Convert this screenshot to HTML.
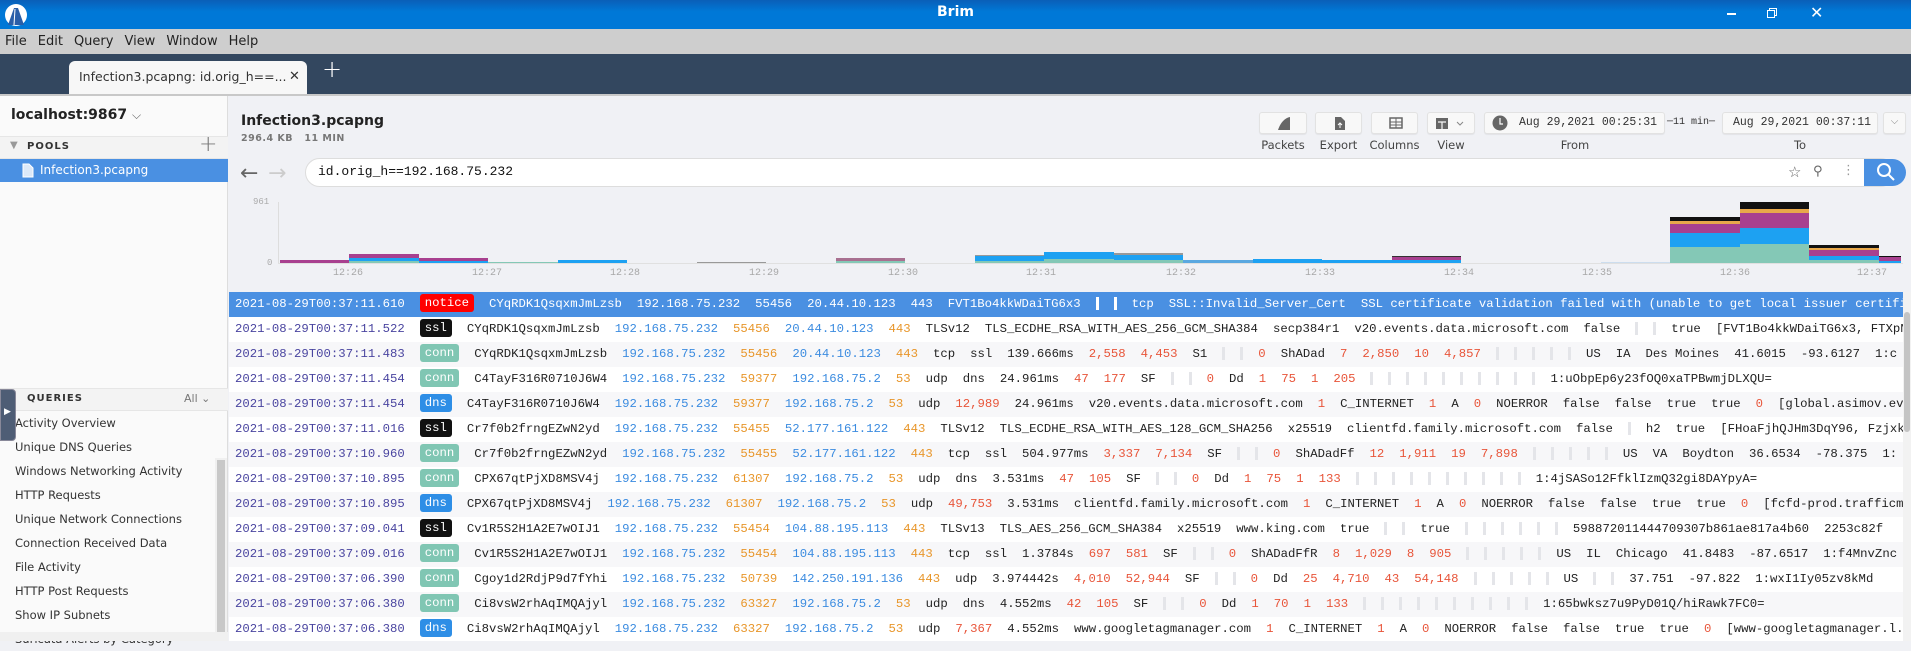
<!DOCTYPE html>
<html><head><meta charset="utf-8"><style>
*{box-sizing:border-box;margin:0;padding:0}
body{width:1911px;height:641px;overflow:hidden;position:relative;font-family:"DejaVu Sans","Liberation Sans",sans-serif;background:#f0f1f5}
.a{position:absolute;white-space:nowrap}
#title{left:0;top:0;width:1911px;height:29px;background:linear-gradient(#0a5fb8,#0078d7 40%,#0078d7);color:#fff;font-size:14px;font-weight:bold;text-align:center;line-height:25px}
#menu{left:0;top:29px;width:1911px;height:25px;background:#cecece;font-size:13px;color:#222;line-height:25px}
#menu span{margin-left:5px;margin-right:6px}
#tabs{left:0;top:54px;width:1911px;height:42px;background:#33475f;border-bottom:2px solid #c8c8c8}
#tab{left:69px;top:7px;width:238px;height:33px;background:#f7f7f7;border-radius:6px 6px 0 0;font-size:12.5px;color:#333;line-height:32px;padding-left:10px;overflow:hidden}
#side{left:0;top:96px;width:228px;height:545px;background:#fafafa;border-right:1px solid #ddd}
.mono{font-family:"Liberation Mono",monospace}
.btn{position:absolute;top:112px;height:22px;background:#f8f8f8;border:1px solid #e2e2e2;border-radius:3px;box-shadow:0 1px 1px rgba(0,0,0,.06);white-space:nowrap}
.lbl{position:absolute;top:138px;font-size:11.5px;color:#444;text-align:center}
#rows{left:229px;top:292px;width:1674px;height:349px;overflow:hidden;font-family:"Liberation Mono",monospace;font-size:12.3px;background:#fff}
.r{height:25px;line-height:25px;white-space:nowrap;color:#222;padding-left:6px}
.r:nth-child(odd){background:#f7f7f9}
.r span{margin-right:15px}
.r .t{color:#4a45a0}
.r .ip{color:#3c8ce0}
.r .pt{color:#e8962a}
.r .n{color:#e8553a}
.b{display:inline-block;height:18px;line-height:18px;padding:0 5px;border-radius:3px;color:#fff;vertical-align:middle;position:relative;top:-1px}
.notice{background:#ff0000}.ssl{background:#111}.conn{background:#80c6b3}.dns{background:#2e8ee6}
.e{display:inline-block;width:3px;height:13px;background:#e4e5e9;vertical-align:middle;margin-right:15px}
.sel{background:#4a90e2!important;color:#fff!important}
.sel span{color:#fff!important}
.sel .e{background:#fff}
.ax{position:absolute;top:268px;font-family:"Liberation Mono",monospace;font-size:10px;color:#a8a8a8}
</style></head><body>
<div id="title" class="a">Brim</div>
<svg class="a" style="left:4px;top:3px" width="24" height="24" viewBox="0 0 24 24"><circle cx="12" cy="12" r="11" fill="#fff"/><path d="M4 22 L10 5 L14 5 L20 22Z" fill="#2a5ea8"/><path d="M11 6 L10 22" stroke="#fff" stroke-width="1"/></svg>
<div class="a" style="left:1727px;top:13px;width:9px;height:1.5px;background:#fff"></div>
<div class="a" style="left:1769px;top:8px;width:8px;height:8px;border:1.3px solid #fff"></div>
<div class="a" style="left:1767px;top:10px;width:8px;height:8px;border:1.3px solid #fff;background:#0078d7"></div>
<div class="a" style="left:1810px;top:3px;color:#fff;font-size:16px">✕</div>
<div id="menu" class="a"><span>File</span><span>Edit</span><span>Query</span><span>View</span><span>Window</span><span>Help</span></div>
<div id="tabs" class="a"><div id="tab" class="a">Infection3.pcapng: id.orig_h==...<span style="position:absolute;left:220px;top:0;font-size:13px">✕</span></div>
<div class="a" style="left:322px;top:1px;color:#fff;font-size:24px;font-weight:300">+</div></div>

<div id="side" class="a">
<div class="a" style="left:11px;top:11px;font-size:14px;font-weight:bold;color:#222">localhost:9867 <span style="font-weight:normal;color:#666;font-size:12px">⌵</span></div>
<div class="a" style="left:0;top:40px;width:228px;height:23px;background:#f3f3f3;border-top:1px solid #e6e6e6;border-bottom:1px solid #e6e6e6"></div>
<div class="a" style="left:10px;top:44px;font-size:10px;color:#999">▼</div>
<div class="a" style="left:27px;top:45px;font-size:10px;font-weight:bold;letter-spacing:1px;color:#333">POOLS</div>
<div class="a" style="left:199px;top:36px;font-size:22px;color:#777;font-weight:300">+</div>
<div class="a" style="left:0;top:63px;width:228px;height:23px;background:#4a90e2"></div>
<svg class="a" style="left:22px;top:67px" width="12" height="15" viewBox="0 0 12 15"><path d="M1 1H7L11 5V14H1Z" fill="#dce9f8" stroke="#fff"/></svg>
<div class="a" style="left:40px;top:67px;font-size:12px;color:#fff">Infection3.pcapng</div>
<div class="a" style="left:0;top:292px;width:228px;height:23px;background:#f3f3f3;border-top:1px solid #e6e6e6;border-bottom:1px solid #e6e6e6"></div>
<div class="a" style="left:27px;top:297px;font-size:10px;font-weight:bold;letter-spacing:1px;color:#333">QUERIES</div>
<div class="a" style="left:184px;top:296px;font-size:11px;color:#777">All ⌄</div>
<div class="a" style="left:15px;top:315px;font-size:11.5px;color:#333;line-height:24px">Activity Overview<br>Unique DNS Queries<br>Windows Networking Activity<br>HTTP Requests<br>Unique Network Connections<br>Connection Received Data<br>File Activity<br>HTTP Post Requests<br>Show IP Subnets<br>Suricata Alerts by Category</div>
<div class="a" style="left:215px;top:362px;width:12px;height:176px;background:#c8c8c8;border:2px solid #f0f0f0"></div>
<div class="a" style="left:0;top:536px;width:228px;height:9px;background:#f0f0f0"></div>
</div>
<div class="a" style="left:0;top:389px;width:16px;height:52px;background:#4e5d75;border-radius:0 4px 4px 0;border:1px solid #889"></div>
<div class="a" style="left:4px;top:407px;color:#fff;font-size:9px">▶</div>

<div class="a" style="left:241px;top:113px;font-size:14px;font-weight:bold;color:#222">Infection3.pcapng</div>
<div class="a" style="left:241px;top:133px;font-size:9.5px;font-weight:bold;color:#777;letter-spacing:.5px">296.4 KB &nbsp; 11 MIN</div>

<div class="btn" style="left:1259px;width:48px"><svg style="position:absolute;left:17px;top:3px" width="14" height="15"><path d="M1 14C3 8 7 2 13 1V14Z" fill="#666"/></svg></div>
<div class="btn" style="left:1315px;width:47px"><svg style="position:absolute;left:18px;top:3px" width="12" height="15"><path d="M1 1H7L11 5V14H1Z" fill="#666"/><path d="M6 12V7M4 9L6 7L8 9" stroke="#fff" fill="none"/></svg></div>
<div class="btn" style="left:1371px;width:47px"><svg style="position:absolute;left:17px;top:4px" width="14" height="12"><rect x="1" y="1" width="12" height="10" fill="none" stroke="#666" stroke-width="1.5"/><path d="M1 5H13M1 8H13M7 1V11" stroke="#666"/></svg></div>
<div class="btn" style="left:1427px;width:48px"><svg style="position:absolute;left:7px;top:4px" width="34" height="13"><rect x="1" y="1" width="12" height="11" fill="#666"/><path d="M3 5H11M7 5V12" stroke="#f8f8f8" stroke-width="1.2"/><path d="M22 5L25 8L28 5" stroke="#888" fill="none"/></svg></div>
<div class="btn mono" style="left:1484px;width:181px;font-size:11.5px;line-height:20px;color:#333;padding-left:34px">Aug 29,2021 00:25:31</div>
<svg class="a" style="left:1492px;top:115px" width="16" height="16"><circle cx="8" cy="8" r="7.5" fill="#666"/><path d="M8 3V9H11" stroke="#fff" fill="none" stroke-width="1.2"/></svg>
<div class="a mono" style="left:1667px;top:117px;font-size:10px;color:#333">─11 min─</div>
<div class="btn mono" style="left:1722px;width:156px;font-size:11.5px;line-height:20px;color:#333;padding-left:10px">Aug 29,2021 00:37:11</div>
<div class="btn" style="left:1883px;width:23px;color:#888;font-size:10px;text-align:center;line-height:18px">⌵</div>
<div class="lbl" style="left:1259px;width:48px">Packets</div>
<div class="lbl" style="left:1315px;width:47px">Export</div>
<div class="lbl" style="left:1368px;width:53px">Columns</div>
<div class="lbl" style="left:1427px;width:48px">View</div>
<div class="lbl" style="left:1545px;width:60px">From</div>
<div class="lbl" style="left:1770px;width:60px">To</div>

<div class="a" style="left:240px;top:161px;font-size:22px;color:#666">←</div>
<div class="a" style="left:268px;top:161px;font-size:22px;color:#ccc">→</div>
<div class="a" style="left:305px;top:158px;width:1590px;height:29px;background:#fff;border-radius:15px;border:1px solid #ddd"></div>
<div class="a mono" style="left:318px;top:164px;font-size:13px;color:#111">id.orig_h==192.168.75.232</div>
<div class="a" style="left:1788px;top:163px;font-size:15px;color:#666">☆</div>
<div class="a" style="left:1813px;top:164px;font-size:13px;color:#666">⚲</div>
<div class="a" style="left:1842px;top:163px;font-size:13px;color:#999">⋮</div>
<div class="a" style="left:1864px;top:159px;width:42px;height:27px;background:#4a90e2;border-radius:0 14px 14px 0"></div>
<svg class="a" style="left:1876px;top:162px" width="20" height="20"><circle cx="8" cy="8" r="6" stroke="#fff" stroke-width="2" fill="none"/><path d="M12.5 12.5L18 18" stroke="#fff" stroke-width="2"/></svg>

<div class="a mono" style="left:253px;top:197px;font-size:9px;color:#aaa">961</div>
<div class="a mono" style="left:267px;top:258px;font-size:9px;color:#aaa">0</div>
<div class="a" style="left:278px;top:202px;width:1px;height:62px;background:#ddd"></div>
<div class="a" style="left:278px;top:263px;width:1625px;height:1px;background:#e0e0e0"></div>
<svg class="a" style="left:0;top:0" width="1911" height="641">
<g>
<rect x="280" y="260" width="69" height="3" fill="#a8408f"/>
<rect x="349" y="254" width="70" height="9" fill="#a8408f"/><rect x="349" y="258" width="70" height="5" fill="#1da1f2"/><rect x="349" y="261" width="70" height="2" fill="#84c8b6"/>
<rect x="419" y="258" width="69" height="5" fill="#a8408f"/><rect x="419" y="261" width="69" height="2" fill="#1da1f2"/>
<rect x="488" y="262" width="70" height="1" fill="#84c8b6"/>
<rect x="558" y="260" width="69" height="3" fill="#1da1f2"/>
<rect x="697" y="262" width="69" height="1" fill="#999"/>
<rect x="836" y="258" width="69" height="5" fill="#a87090"/><rect x="836" y="261" width="69" height="2" fill="#84c8b6"/>
<rect x="975" y="256" width="69" height="7" fill="#1da1f2"/><rect x="975" y="255" width="69" height="1" fill="#999"/><rect x="975" y="261" width="69" height="2" fill="#84c8b6"/>
<rect x="1044" y="252" width="70" height="11" fill="#1da1f2"/><rect x="1044" y="259" width="70" height="4" fill="#84c8b6"/>
<rect x="1114" y="254" width="69" height="9" fill="#1da1f2"/><rect x="1114" y="253" width="69" height="2" fill="#999"/><rect x="1114" y="260" width="69" height="3" fill="#84c8b6"/>
<rect x="1183" y="260" width="70" height="3" fill="#5aa8e0"/>
<rect x="1253" y="259" width="69" height="4" fill="#1da1f2"/>
<rect x="1322" y="260" width="70" height="3" fill="#1da1f2"/>
<rect x="1392" y="257" width="69" height="6" fill="#a8408f"/><rect x="1392" y="256" width="69" height="1" fill="#333"/><rect x="1392" y="260" width="69" height="3" fill="#1da1f2"/>
<rect x="1601" y="262" width="69" height="1" fill="#cde"/>
<rect x="1670" y="217" width="70" height="4" fill="#111"/><rect x="1670" y="221" width="70" height="3" fill="#e8a84a"/><rect x="1670" y="224" width="70" height="9" fill="#a8408f"/><rect x="1670" y="233" width="70" height="14" fill="#1da1f2"/><rect x="1670" y="247" width="70" height="16" fill="#84c8b6"/>
<rect x="1740" y="202" width="69" height="7" fill="#111"/><rect x="1740" y="209" width="69" height="4" fill="#e8a84a"/><rect x="1740" y="213" width="69" height="15" fill="#a8408f"/><rect x="1740" y="228" width="69" height="16" fill="#1da1f2"/><rect x="1740" y="244" width="69" height="19" fill="#84c8b6"/>
<rect x="1809" y="245" width="70" height="3" fill="#111"/><rect x="1809" y="248" width="70" height="2" fill="#e8a84a"/><rect x="1809" y="250" width="70" height="6" fill="#a8408f"/><rect x="1809" y="256" width="70" height="4" fill="#1da1f2"/><rect x="1809" y="260" width="70" height="3" fill="#84c8b6"/>
<rect x="1879" y="256" width="22" height="7" fill="#a8408f"/><rect x="1879" y="256" width="22" height="1" fill="#111"/><rect x="1879" y="261" width="22" height="2" fill="#1da1f2"/>
</g></svg>
<div class="ax" style="left:333px">12:26</div><div class="ax" style="left:472px">12:27</div><div class="ax" style="left:610px">12:28</div><div class="ax" style="left:749px">12:29</div><div class="ax" style="left:888px">12:30</div><div class="ax" style="left:1026px">12:31</div><div class="ax" style="left:1166px">12:32</div><div class="ax" style="left:1305px">12:33</div><div class="ax" style="left:1444px">12:34</div><div class="ax" style="left:1582px">12:35</div><div class="ax" style="left:1720px">12:36</div><div class="ax" style="left:1857px">12:37</div>

<div id="rows" class="a">
<div class="r sel"><span class="t">2021-08-29T00:37:11.610</span><span class="b notice">notice</span><span>CYqRDK1QsqxmJmLzsb</span><span>192.168.75.232</span><span>55456</span><span>20.44.10.123</span><span>443</span><span>FVT1Bo4kkWDaiTG6x3</span><i class="e"></i><i class="e"></i><span>tcp</span><span>SSL::Invalid_Server_Cert</span><span>SSL certificate validation failed with (unable to get local issuer certificate)</span></div>
<div class="r"><span class="t">2021-08-29T00:37:11.522</span><span class="b ssl">ssl</span><span>CYqRDK1QsqxmJmLzsb</span><span class="ip">192.168.75.232</span><span class="pt">55456</span><span class="ip">20.44.10.123</span><span class="pt">443</span><span>TLSv12</span><span>TLS_ECDHE_RSA_WITH_AES_256_GCM_SHA384</span><span>secp384r1</span><span>v20.events.data.microsoft.com</span><span>false</span><i class="e"></i><i class="e"></i><span>true</span><span>[FVT1Bo4kkWDaiTG6x3, FTXpNA3t</span></div>
<div class="r"><span class="t">2021-08-29T00:37:11.483</span><span class="b conn">conn</span><span>CYqRDK1QsqxmJmLzsb</span><span class="ip">192.168.75.232</span><span class="pt">55456</span><span class="ip">20.44.10.123</span><span class="pt">443</span><span>tcp</span><span>ssl</span><span>139.666ms</span><span class="n">2,558</span><span class="n">4,453</span><span>S1</span><i class="e"></i><i class="e"></i><span class="n">0</span><span>ShADad</span><span class="n">7</span><span class="n">2,850</span><span class="n">10</span><span class="n">4,857</span><i class="e"></i><i class="e"></i><i class="e"></i><i class="e"></i><i class="e"></i><span>US</span><span>IA</span><span>Des Moines</span><span>41.6015</span><span>-93.6127</span><span>1:c</span></div>
<div class="r"><span class="t">2021-08-29T00:37:11.454</span><span class="b conn">conn</span><span>C4TayF316R0710J6W4</span><span class="ip">192.168.75.232</span><span class="pt">59377</span><span class="ip">192.168.75.2</span><span class="pt">53</span><span>udp</span><span>dns</span><span>24.961ms</span><span class="n">47</span><span class="n">177</span><span>SF</span><i class="e"></i><i class="e"></i><span class="n">0</span><span>Dd</span><span class="n">1</span><span class="n">75</span><span class="n">1</span><span class="n">205</span><i class="e"></i><i class="e"></i><i class="e"></i><i class="e"></i><i class="e"></i><i class="e"></i><i class="e"></i><i class="e"></i><i class="e"></i><i class="e"></i><span>1:uObpEp6y23fOQ0xaTPBwmjDLXQU=</span></div>
<div class="r"><span class="t">2021-08-29T00:37:11.454</span><span class="b dns">dns</span><span>C4TayF316R0710J6W4</span><span class="ip">192.168.75.232</span><span class="pt">59377</span><span class="ip">192.168.75.2</span><span class="pt">53</span><span>udp</span><span class="n">12,989</span><span>24.961ms</span><span>v20.events.data.microsoft.com</span><span class="n">1</span><span>C_INTERNET</span><span class="n">1</span><span>A</span><span class="n">0</span><span>NOERROR</span><span>false</span><span>false</span><span>true</span><span>true</span><span class="n">0</span><span>[global.asimov.events.data</span></div>
<div class="r"><span class="t">2021-08-29T00:37:11.016</span><span class="b ssl">ssl</span><span>Cr7f0b2frngEZwN2yd</span><span class="ip">192.168.75.232</span><span class="pt">55455</span><span class="ip">52.177.161.122</span><span class="pt">443</span><span>TLSv12</span><span>TLS_ECDHE_RSA_WITH_AES_128_GCM_SHA256</span><span>x25519</span><span>clientfd.family.microsoft.com</span><span>false</span><i class="e"></i><span>h2</span><span>true</span><span>[FHoaFjhQJHm3DqY96, Fzjxkr1Y</span></div>
<div class="r"><span class="t">2021-08-29T00:37:10.960</span><span class="b conn">conn</span><span>Cr7f0b2frngEZwN2yd</span><span class="ip">192.168.75.232</span><span class="pt">55455</span><span class="ip">52.177.161.122</span><span class="pt">443</span><span>tcp</span><span>ssl</span><span>504.977ms</span><span class="n">3,337</span><span class="n">7,134</span><span>SF</span><i class="e"></i><i class="e"></i><span class="n">0</span><span>ShADadFf</span><span class="n">12</span><span class="n">1,911</span><span class="n">19</span><span class="n">7,898</span><i class="e"></i><i class="e"></i><i class="e"></i><i class="e"></i><i class="e"></i><span>US</span><span>VA</span><span>Boydton</span><span>36.6534</span><span>-78.375</span><span>1:</span></div>
<div class="r"><span class="t">2021-08-29T00:37:10.895</span><span class="b conn">conn</span><span>CPX67qtPjXD8MSV4j</span><span class="ip">192.168.75.232</span><span class="pt">61307</span><span class="ip">192.168.75.2</span><span class="pt">53</span><span>udp</span><span>dns</span><span>3.531ms</span><span class="n">47</span><span class="n">105</span><span>SF</span><i class="e"></i><i class="e"></i><span class="n">0</span><span>Dd</span><span class="n">1</span><span class="n">75</span><span class="n">1</span><span class="n">133</span><i class="e"></i><i class="e"></i><i class="e"></i><i class="e"></i><i class="e"></i><i class="e"></i><i class="e"></i><i class="e"></i><i class="e"></i><i class="e"></i><span>1:4jSASo12FfklIzmQ32gi8DAYpyA=</span></div>
<div class="r"><span class="t">2021-08-29T00:37:10.895</span><span class="b dns">dns</span><span>CPX67qtPjXD8MSV4j</span><span class="ip">192.168.75.232</span><span class="pt">61307</span><span class="ip">192.168.75.2</span><span class="pt">53</span><span>udp</span><span class="n">49,753</span><span>3.531ms</span><span>clientfd.family.microsoft.com</span><span class="n">1</span><span>C_INTERNET</span><span class="n">1</span><span>A</span><span class="n">0</span><span>NOERROR</span><span>false</span><span>false</span><span>true</span><span>true</span><span class="n">0</span><span>[fcfd-prod.trafficmanager</span></div>
<div class="r"><span class="t">2021-08-29T00:37:09.041</span><span class="b ssl">ssl</span><span>Cv1R5S2H1A2E7wOIJ1</span><span class="ip">192.168.75.232</span><span class="pt">55454</span><span class="ip">104.88.195.113</span><span class="pt">443</span><span>TLSv13</span><span>TLS_AES_256_GCM_SHA384</span><span>x25519</span><span>www.king.com</span><span>true</span><i class="e"></i><i class="e"></i><span>true</span><i class="e"></i><i class="e"></i><i class="e"></i><i class="e"></i><i class="e"></i><i class="e"></i><span>598872011444709307b861ae817a4b60</span><span>2253c82f</span></div>
<div class="r"><span class="t">2021-08-29T00:37:09.016</span><span class="b conn">conn</span><span>Cv1R5S2H1A2E7wOIJ1</span><span class="ip">192.168.75.232</span><span class="pt">55454</span><span class="ip">104.88.195.113</span><span class="pt">443</span><span>tcp</span><span>ssl</span><span>1.3784s</span><span class="n">697</span><span class="n">581</span><span>SF</span><i class="e"></i><i class="e"></i><span class="n">0</span><span>ShADadFfR</span><span class="n">8</span><span class="n">1,029</span><span class="n">8</span><span class="n">905</span><i class="e"></i><i class="e"></i><i class="e"></i><i class="e"></i><i class="e"></i><span>US</span><span>IL</span><span>Chicago</span><span>41.8483</span><span>-87.6517</span><span>1:f4MnvZnc</span></div>
<div class="r"><span class="t">2021-08-29T00:37:06.390</span><span class="b conn">conn</span><span>Cgoy1d2RdjP9d7fYhi</span><span class="ip">192.168.75.232</span><span class="pt">50739</span><span class="ip">142.250.191.136</span><span class="pt">443</span><span>udp</span><span>3.974442s</span><span class="n">4,010</span><span class="n">52,944</span><span>SF</span><i class="e"></i><i class="e"></i><span class="n">0</span><span>Dd</span><span class="n">25</span><span class="n">4,710</span><span class="n">43</span><span class="n">54,148</span><i class="e"></i><i class="e"></i><i class="e"></i><i class="e"></i><i class="e"></i><span>US</span><i class="e"></i><i class="e"></i><span>37.751</span><span>-97.822</span><span>1:wxI1Iy05zv8kMd</span></div>
<div class="r"><span class="t">2021-08-29T00:37:06.380</span><span class="b conn">conn</span><span>Ci8vsW2rhAqIMQAjyl</span><span class="ip">192.168.75.232</span><span class="pt">63327</span><span class="ip">192.168.75.2</span><span class="pt">53</span><span>udp</span><span>dns</span><span>4.552ms</span><span class="n">42</span><span class="n">105</span><span>SF</span><i class="e"></i><i class="e"></i><span class="n">0</span><span>Dd</span><span class="n">1</span><span class="n">70</span><span class="n">1</span><span class="n">133</span><i class="e"></i><i class="e"></i><i class="e"></i><i class="e"></i><i class="e"></i><i class="e"></i><i class="e"></i><i class="e"></i><i class="e"></i><i class="e"></i><span>1:65bwksz7u9PyD01Q/hiRawk7FC0=</span></div>
<div class="r"><span class="t">2021-08-29T00:37:06.380</span><span class="b dns">dns</span><span>Ci8vsW2rhAqIMQAjyl</span><span class="ip">192.168.75.232</span><span class="pt">63327</span><span class="ip">192.168.75.2</span><span class="pt">53</span><span>udp</span><span class="n">7,367</span><span>4.552ms</span><span>www.googletagmanager.com</span><span class="n">1</span><span>C_INTERNET</span><span class="n">1</span><span>A</span><span class="n">0</span><span>NOERROR</span><span>false</span><span>false</span><span>true</span><span>true</span><span class="n">0</span><span>[www-googletagmanager.l.google</span></div>
</div>
<div class="a" style="left:1903px;top:292px;width:8px;height:349px;background:#f2f2f2"></div>
<div class="a" style="left:1904px;top:312px;width:6px;height:120px;background:#c4c4c4;border-radius:3px"></div>
</body></html>
